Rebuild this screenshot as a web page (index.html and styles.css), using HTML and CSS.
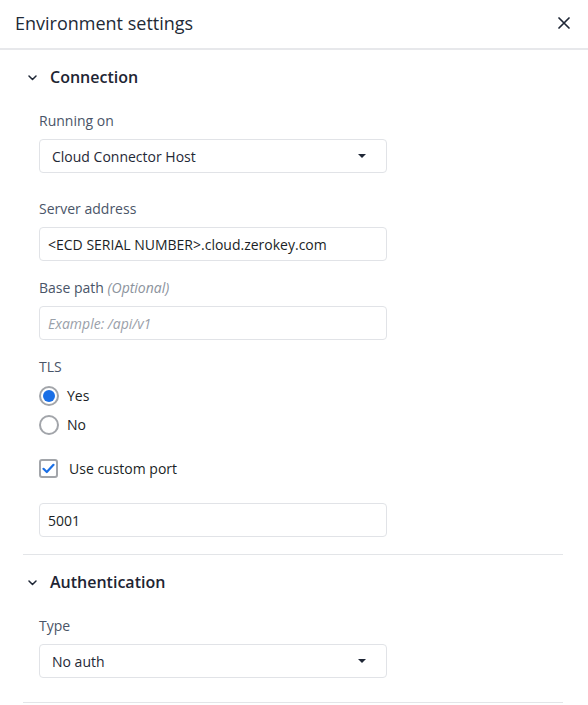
FILE: index.html
```html
<!DOCTYPE html>
<html>
<head>
<meta charset="utf-8">
<link rel="stylesheet" href="styles.css">
</head>
<body>
<div class="panel">
  <header class="header">
    <h1 class="title">Environment settings</h1>
    <button class="close" aria-label="Close">
      <svg width="12" height="12" viewBox="0 0 12 12"><path d="M1 1L11 11M11 1L1 11" stroke="#1f2736" stroke-width="1.7" stroke-linecap="round"/></svg>
    </button>
  </header>

  <section class="section">
    <div class="section-head">
      <svg class="chev" width="9" height="6" viewBox="0 0 9 6"><path d="M1 1L4.5 4.5L8 1" fill="none" stroke="#1f2736" stroke-width="1.5" stroke-linecap="round" stroke-linejoin="round"/></svg>
      <span class="section-title">Connection</span>
    </div>
    <div class="section-body">
      <div class="field field-select">
        <div class="label">Running on</div>
        <div class="select"><span>Cloud Connector Host</span><span class="caret"></span></div>
      </div>
      <div class="field">
        <div class="label">Server address</div>
        <div class="input">&lt;ECD SERIAL NUMBER&gt;.cloud.zerokey.com</div>
      </div>
      <div class="field">
        <div class="label">Base path <em class="opt">(Optional)</em></div>
        <div class="input placeholder">Example: /api/v1</div>
      </div>
      <div class="field field-radios">
        <div class="label label-tight">TLS</div>
        <div class="radios">
          <div class="radio-row"><span class="radio checked"></span><span>Yes</span></div>
          <div class="radio-row"><span class="radio"></span><span>No</span></div>
        </div>
      </div>
      <div class="check-row">
        <span class="checkbox"><svg width="13" height="11" viewBox="0 0 13 11"><path d="M1.5 5.8L4.8 9L11.5 1.8" fill="none" stroke="#1a6fe6" stroke-width="2.2" stroke-linecap="round" stroke-linejoin="round"/></svg></span>
        <span>Use custom port</span>
      </div>
      <div class="input port">5001</div>
    </div>
  </section>

  <section class="section">
    <div class="section-head">
      <svg class="chev" width="9" height="6" viewBox="0 0 9 6"><path d="M1 1L4.5 4.5L8 1" fill="none" stroke="#1f2736" stroke-width="1.5" stroke-linecap="round" stroke-linejoin="round"/></svg>
      <span class="section-title">Authentication</span>
    </div>
    <div class="section-body last">
      <div class="field field-last">
        <div class="label">Type</div>
        <div class="select"><span>No auth</span><span class="caret"></span></div>
      </div>
    </div>
  </section>
</div>
</body>
</html>
```

FILE: styles.css
```css
* { box-sizing: border-box; }
html, body { margin: 0; padding: 0; background: #ffffff; }
body {
  font-family: "Open Sans", "Noto Sans", sans-serif;
  color: #1f2736;
  width: 588px;
  height: 705px;
  overflow: hidden;
}
.header {
  height: 50px;
  display: flex;
  align-items: center;
  justify-content: space-between;
  padding: 0 18px 2px 15px;
  border-bottom: 2px solid #e7e8eb;
}
.title {
  margin: 0;
  font-size: 18px;
  font-weight: 400;
  color: #222a37;
  line-height: 24px;
}
.close {
  border: 0;
  background: none;
  padding: 0;
  width: 12px;
  height: 12px;
  display: flex;
}
.section {
  margin: 0 25px 0 23px;
  border-bottom: 1px solid #e3e5e8;
}
.section-head {
  display: flex;
  align-items: center;
  padding: 16px 0 0 5px;
  height: 38px;
}
.chev { margin-right: 13px; margin-top: 1px; }
.section-title {
  font-size: 16px;
  font-weight: 600;
  line-height: 22px;
  color: #1e2533;
}
.section-body {
  padding: 23px 0 17px 16px;
}
.section-body.last { padding-bottom: 24px; }
.field { margin-bottom: 17px; }
.field-select { margin-bottom: 26px; }
.field-radios { margin-bottom: 0; }
.field-last { margin-bottom: 0; }
.label {
  font-size: 14px;
  line-height: 20px;
  color: #4a5568;
  margin-bottom: 8px;
}
.label-tight { margin-bottom: 4px; }
.opt { color: #8c939d; font-style: italic; }
.select, .input {
  width: 348px;
  height: 34px;
  border: 1px solid #e1e3e7;
  border-radius: 4px;
  display: flex;
  align-items: center;
  font-size: 14px;
  color: #1b1f26;
}
.select {
  padding: 0 20px 0 12px;
  justify-content: space-between;
  color: #1f2937;
}
.input { padding: 0 8px; }
.input.placeholder { color: #9aa0a9; font-style: italic; }
.caret {
  width: 0;
  height: 0;
  border-left: 4px solid transparent;
  border-right: 4px solid transparent;
  border-top: 4px solid #1f2736;
}
.radio-row {
  height: 29px;
  display: flex;
  align-items: center;
  font-size: 14px;
  color: #1b1f26;
}
.radio {
  width: 20px;
  height: 20px;
  border-radius: 50%;
  border: 2px solid #a2a5aa;
  margin-right: 8px;
  display: flex;
  align-items: center;
  justify-content: center;
}
.radio.checked::after {
  content: "";
  width: 12px;
  height: 12px;
  border-radius: 50%;
  background: #1a6fe6;
}
.check-row {
  margin-top: 15px;
  height: 29px;
  display: flex;
  align-items: center;
  font-size: 14px;
  color: #1b1f26;
}
.checkbox {
  width: 19px;
  height: 19px;
  border: 2px solid #a2a5aa;
  border-radius: 3px;
  margin-right: 11px;
  display: flex;
  align-items: center;
  justify-content: center;
}
.port { margin-top: 20px; }
```
